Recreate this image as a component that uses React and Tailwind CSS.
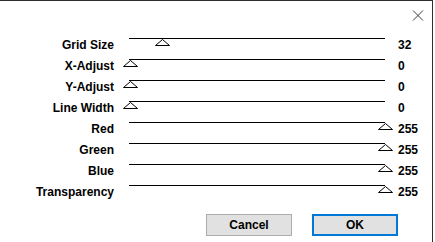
import React from "react";

const rows = [
    { label: "Grid Size", value: 32 },
    { label: "X-Adjust", value: 0 },
    { label: "Y-Adjust", value: 0 },
    { label: "Line Width", value: 0 },
    { label: "Red", value: 255 },
    { label: "Green", value: 255 },
    { label: "Blue", value: 255 },
    { label: "Transparency", value: 255 },
];

function Slider({ value }) {
    return (
        <div className="relative w-[270px] h-[21px] ml-[8px]">
            {/* track */}
            <div className="absolute left-[7px] top-[2px] w-[256px] h-px bg-black" />
            {/* thumb */}
            <svg
                className="absolute top-[3px]"
                style={{ left: value + 1 }}
                width="15"
                height="7"
                viewBox="0 0 15 7"
            >
                <polygon points="0.5,6.5 7.5,0.5 14.5,6.5" fill="white" stroke="black" strokeWidth="1" />
            </svg>
        </div>
    );
}

export default function App() {
    return (
        <div className="w-[435px] h-[242px] bg-white overflow-hidden" style={{ fontFamily: '"Liberation Sans", Arial, sans-serif' }}>
            <div className="w-[433px] h-[242px] border-t border-r border-[#2e2e2e] bg-white">
                {/* header with close */}
                <div className="h-[35px] flex justify-end pt-[9px] pr-[8px]">
                    <svg width="12" height="11" viewBox="0 0 12 11">
                        <path d="M1 0.5 L11 10.5 M11 0.5 L1 10.5" stroke="#3a3a3a" strokeWidth="1" fill="none" />
                    </svg>
                </div>

                {/* slider rows */}
                <div className="flex flex-col">
                    {rows.map((row) => (
                        <div key={row.label} className="flex h-[21px]">
                            <div className="w-[114px] text-right text-[12px] font-bold leading-[16px] pt-[1px] text-black">
                                {row.label}
                            </div>
                            <Slider value={row.value} />
                            <div className="ml-[6px] text-[12px] font-bold leading-[16px] pt-[1px] text-black">
                                {row.value}
                            </div>
                        </div>
                    ))}
                </div>

                {/* buttons */}
                <div className="flex gap-[20px] ml-[206px] mt-[10px]">
                    <button className="w-[86px] h-[22px] bg-[#e1e1e1] border border-[#adadad] text-[12px] font-bold text-black">
                        Cancel
                    </button>
                    <button className="w-[86px] h-[22px] bg-[#e1e1e1] border-2 border-[#0078d7] text-[12px] font-bold text-black">
                        OK
                    </button>
                </div>
            </div>
        </div>
    );
}
